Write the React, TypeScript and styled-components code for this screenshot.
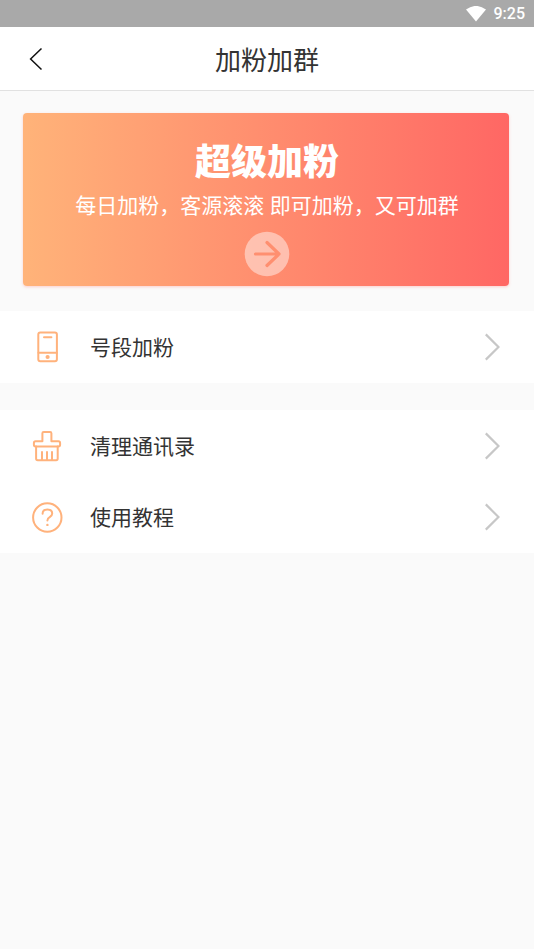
import React from 'react';
import styled, { createGlobalStyle } from 'styled-components';

const GlobalStyle = createGlobalStyle`
  *, *::before, *::after { box-sizing: border-box; }
  body {
    margin: 0;
    background: #fafafa;
    color: #333333;
    font-family: "Noto Sans CJK SC", "Noto Sans", sans-serif;
  }
  button { font: inherit; color: inherit; border: 0; padding: 0; cursor: pointer; }
  svg { display: block; flex: none; }
`;

const StatusBar = styled.div`
  display: flex;
  align-items: center;
  justify-content: flex-end;
  gap: 8px;
  height: 27px;
  padding: 0 9px;
  background: #a9a9a9;
`;

const Clock = styled.time`
  color: #ffffff;
  font: 500 16px/28px Roboto, sans-serif;
`;

const Header = styled.header`
  display: grid;
  grid-template-columns: 72px 1fr 72px;
  align-items: center;
  height: 64px;
  background: #ffffff;
  border-bottom: 1px solid #e1e1e1;
`;

const BackButton = styled.button`
  display: grid;
  place-items: center;
  height: 63px;
  background: transparent;
`;

const PageTitle = styled.h1`
  margin: 0;
  text-align: center;
  font-size: 26px;
  line-height: 38px;
  font-weight: 400;
`;

const Content = styled.main`
  display: flex;
  flex-direction: column;
  gap: 27px;
`;

const Banner = styled.section`
  display: flex;
  flex-direction: column;
  align-items: center;
  margin: 22px 25px -2px 23px;
  padding: 22px 14px 9px 16px;
  border-radius: 4px;
  background: linear-gradient(90deg, #ffb379, #ff6764);
  box-shadow: 0 1px 3px rgba(255, 103, 100, 0.3);
  color: #ffffff;
`;

const BannerTitle = styled.h2`
  margin: 0;
  font-size: 36px;
  line-height: 48px;
  font-weight: 900;
`;

const BannerText = styled.p`
  margin: 0 0 4px;
  font-family: "Noto Sans", "Noto Sans CJK SC", sans-serif;
  font-size: 21px;
  line-height: 44px;
  white-space: nowrap;
`;

const GoButton = styled.button`
  display: block;
  border-radius: 50%;
  background: transparent;
`;

const Group = styled.nav`
  padding-bottom: 1px;
  background: #ffffff;
`;

const Row = styled.button`
  display: grid;
  grid-template-columns: 30px 1fr 16px;
  align-items: center;
  column-gap: 28px;
  width: 100%;
  height: 71px;
  padding: 0 34px 0 32px;
  background: transparent;
  text-align: left;
  font-size: 21px;
  line-height: 30px;
`;

const RowLabel = styled.span`
  padding-bottom: 2px;
`;

const LineIcon = styled.svg`
  width: 30px;
  height: 32px;
  fill: none;
  stroke: #ffb27c;
  stroke-width: 2;
  stroke-linecap: round;
  stroke-linejoin: round;
`;

const PhoneIcon = () => (
  <LineIcon viewBox="0 0 30 32" aria-hidden="true">
    <rect x="6.3" y="1.6" width="18.6" height="28.6" rx="2" />
    <path d="M6.5 21.8h18.2M12 6.3h7.4" />
    <circle cx="15.6" cy="26" r="1.1" fill="#ffb27c" />
  </LineIcon>
);

const BrushIcon = () => (
  <LineIcon viewBox="0 0 30 32" aria-hidden="true">
    <path d="M10.4 11.2V3.3q0-1.3 1.3-1.3h6.4q1.3 0 1.3 1.3v7.9h7q1.7 0 1.7 1.7v1.8q0 1.7-1.7 1.7H3.6q-1.7 0-1.7-1.7v-1.8q0-1.7 1.7-1.7z" />
    <path d="M4.1 16.6v12q0 1.6 1.6 1.6h18.4q1.6 0 1.6-1.6v-12M10 22v8M15 22v8M20 22v8" />
  </LineIcon>
);

const HelpIcon = () => (
  <LineIcon viewBox="0 0 30 32" aria-hidden="true" overflow="visible">
    <circle cx="15.3" cy="16.5" r="14.2" />
    <path d="M10.6 12.8q0-4.3 4.8-4.3t4.8 4.1q0 1.8-2.2 3.2-2.6 1.6-2.6 3.6" />
    <circle cx="15.4" cy="23.9" r="1.2" fill="#ffb27c" stroke="none" />
  </LineIcon>
);

const Chevron = () => (
  <svg width="16" height="28" viewBox="0 0 16 28" fill="none" stroke="#c7c7c7" strokeWidth="2.2" aria-hidden="true">
    <path d="M1.8 1.4 14.5 14 1.8 26.6" />
  </svg>
);

type MenuItem = { label: string; icon: React.ReactNode };

const groups: MenuItem[][] = [
  [{ label: '号段加粉', icon: <PhoneIcon /> }],
  [
    { label: '清理通讯录', icon: <BrushIcon /> },
    { label: '使用教程', icon: <HelpIcon /> },
  ],
];

export default function App() {
  return (
    <>
      <GlobalStyle />
      <StatusBar>
        <svg width="20" height="16" viewBox="0 0 20 16" fill="#ffffff" aria-hidden="true">
          <path d="M0 3.6Q10-3.8 20 3.6L10 15.6z" />
        </svg>
        <Clock>9:25</Clock>
      </StatusBar>
      <Header>
        <BackButton type="button" aria-label="返回">
          <svg width="14" height="24" viewBox="0 0 14 24" fill="none" stroke="#111111" strokeWidth="1.5" aria-hidden="true">
            <path d="M12.5 1.5 1.6 12l10.9 10.5" />
          </svg>
        </BackButton>
        <PageTitle>加粉加群</PageTitle>
      </Header>
      <Content>
        <Banner>
          <BannerTitle>超级加粉</BannerTitle>
          <BannerText>每日加粉，客源滚滚 即可加粉，又可加群</BannerText>
          <GoButton type="button" aria-label="超级加粉">
            <svg width="46" height="46" viewBox="0 0 46 46" fill="none" aria-hidden="true">
              <circle cx="23" cy="23" r="22.3" fill="#ffffff" fillOpacity="0.45" />
              <path d="M11.5 23h23.5M23 11.5 35 23 23 34.5" stroke="#ff8f70" strokeWidth="3.2" strokeLinecap="round" strokeLinejoin="round" />
            </svg>
          </GoButton>
        </Banner>
        {groups.map((items) => (
          <Group key={items[0].label}>
            {items.map(({ label, icon }) => (
              <Row key={label} type="button">
                {icon}
                <RowLabel>{label}</RowLabel>
                <Chevron />
              </Row>
            ))}
          </Group>
        ))}
      </Content>
    </>
  );
}
